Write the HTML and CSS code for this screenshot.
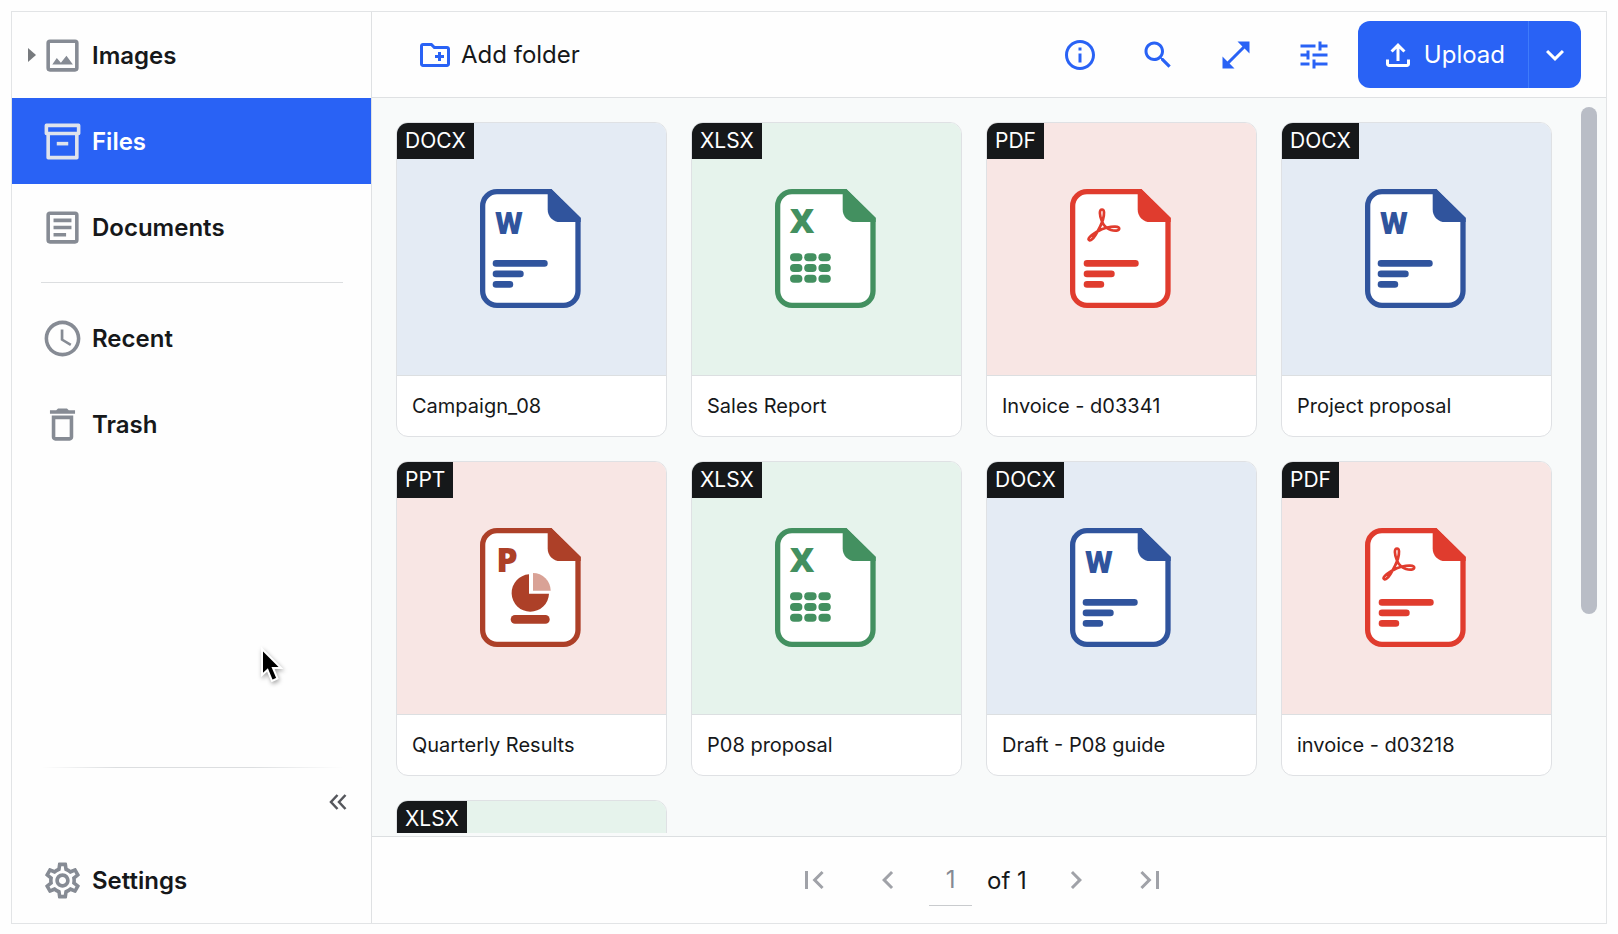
FILE: index.html
```html
<!DOCTYPE html>
<html lang="en">
<head>
    <meta charset="UTF-8">
    <title>File Manager</title>
    <link rel="stylesheet" href="styles.css">
</head>
<body>

<!-- shared file type icons -->
<svg class="sprite" aria-hidden="true">
    <symbol id="page" viewBox="0 0 101 119">
        <path fill="#fff" stroke="currentColor" stroke-width="5.3" d="M17 2.650H70L98 30V102A14.350 14.350 0 0 1 83.700 116.350H17A14.350 14.350 0 0 1 2.650 102V17A14.350 14.350 0 0 1 17 2.650z"/>
        <path fill="currentColor" d="M67.700 0H71.500L100.700 28.700V33H80a12.300 12.300 0 0 1-12.300-12.300z"/>
    </symbol>
    <symbol id="lines" viewBox="0 0 101 119">
        <g fill="currentColor">
            <rect x="12.700" y="71" width="55" height="6.700" rx="3.300"/>
            <rect x="12.700" y="81.500" width="31" height="6.700" rx="3.300"/>
            <rect x="12.700" y="92" width="20.500" height="6.700" rx="3.300"/>
        </g>
    </symbol>
    <symbol id="docx" viewBox="0 0 101 119">
        <use href="#page"/>
        <text class="letter letter-w" x="29" y="45">W</text>
        <use href="#lines"/>
    </symbol>
    <symbol id="xlsx" viewBox="0 0 101 119">
        <use href="#page"/>
        <text class="letter" x="27" y="44">X</text>
        <g fill="currentColor">
            <rect x="15" y="64.300" width="12.400" height="8" rx="4"/>
            <rect x="29.200" y="64.300" width="12.400" height="8" rx="4"/>
            <rect x="43.400" y="64.300" width="12.400" height="8" rx="4"/>
            <rect x="15" y="75" width="12.400" height="8" rx="4"/>
            <rect x="29.200" y="75" width="12.400" height="8" rx="4"/>
            <rect x="43.400" y="75" width="12.400" height="8" rx="4"/>
            <rect x="15" y="85.700" width="12.400" height="8" rx="4"/>
            <rect x="29.200" y="85.700" width="12.400" height="8" rx="4"/>
            <rect x="43.400" y="85.700" width="12.400" height="8" rx="4"/>
        </g>
    </symbol>
    <symbol id="pdf" viewBox="0 0 101 119">
        <use href="#page"/>
        <path fill="none" stroke="currentColor" stroke-width="2.700" stroke-linejoin="round" d="M32 20.500c-2.800 0-2.800 5 0 12 1.500 4 5 7 9 8.500 4 1.200 8.200.8 8.200-1.500 0-2.500-6.700-2.200-12.200-1-4 1-8 3-10.500 4.500-4 2.500-8.500 5.500-8 7.500 1 2 4 .5 7-4.500 3-5 6-10.500 7.500-15.500 1.500-6 1.500-10-1-10z"/>
        <use href="#lines" x="1"/>
    </symbol>
    <symbol id="ppt" viewBox="0 0 101 119">
        <use href="#page"/>
        <text class="letter" x="27" y="44">P</text>
        <path fill="currentColor" d="M49 46.300A18.700 18.700 0 1 0 69 65.700H49z"/>
        <path fill="#d9a296" d="M53 45A17.700 17.700 0 0 1 70.700 62.700H53z"/>
        <rect fill="currentColor" x="30.700" y="87" width="39" height="8.700" rx="4.300"/>
    </symbol>
</svg>

<div class="manager">
    <nav class="sidebar">
        <a class="nav-item" href="#">
            <svg class="caret" viewBox="0 0 8 14"><path d="M0 0l8 7-8 7z"/></svg>
            <svg class="nav-icon" viewBox="0 0 24 24"><path fill-rule="evenodd" d="M5 3h14a2 2 0 0 1 2 2v14a2 2 0 0 1-2 2H5a2 2 0 0 1-2-2V5a2 2 0 0 1 2-2zm0 2v14h14V5z"/><path d="M6.300 17l2.500-3.600 2.300 2.700 3.100-4 3.600 4.900z"/></svg>
            Images
        </a>
        <a class="nav-item active" href="#">
            <span class="caret"></span>
            <svg class="nav-icon" viewBox="0 0 24 24"><path fill="none" stroke="currentColor" stroke-width="2" stroke-linejoin="round" d="M3 3h18v4.500H3zM4 8v13h16V8"/><path d="M8.800 12.200h6.400v2H8.800z"/></svg>
            Files
        </a>
        <a class="nav-item" href="#">
            <span class="caret"></span>
            <svg class="nav-icon" viewBox="0 0 24 24"><path fill-rule="evenodd" d="M5 3h14a2 2 0 0 1 2 2v14a2 2 0 0 1-2 2H5a2 2 0 0 1-2-2V5a2 2 0 0 1 2-2zm0 2v14h14V5z"/><path d="M7 7h10v2H7zM7 11h10v2H7zM7 15h7v2H7z"/></svg>
            Documents
        </a>
        <hr class="divider">
        <a class="nav-item" href="#">
            <span class="caret"></span>
            <svg class="nav-icon" viewBox="0 0 24 24"><path d="M11.990 2C6.470 2 2 6.480 2 12s4.470 10 9.990 10C17.520 22 22 17.520 22 12S17.520 2 11.990 2zM12 20c-4.420 0-8-3.580-8-8s3.580-8 8-8 8 3.580 8 8-3.580 8-8 8zm.5-13H11v6l5.250 3.150.75-1.230-4.500-2.670z"/></svg>
            Recent
        </a>
        <a class="nav-item" href="#">
            <span class="caret"></span>
            <svg class="nav-icon" viewBox="0 0 24 24"><path d="M6 19c0 1.100.9 2 2 2h8c1.100 0 2-.9 2-2V7H6v12zM8 9h8v10H8V9zm7.500-5l-1-1h-5l-1 1H5v2h14V4z"/></svg>
            Trash
        </a>

        <div class="sidebar-bottom">
            <div class="fade-line"></div>
            <button class="collapse" aria-label="Collapse sidebar">
                <svg viewBox="0 0 18 16"><path fill="none" stroke="currentColor" stroke-width="2.500" d="M8.500 1L2 8l6.500 7M16.500 1L10 8l6.500 7"/></svg>
            </button>
            <a class="nav-item" href="#">
                <span class="caret"></span>
                <svg class="nav-icon" viewBox="0 0 24 24"><path d="M19.430 12.980c.04-.32.07-.64.07-.98 0-.34-.03-.66-.07-.98l2.110-1.650c.19-.15.24-.42.12-.64l-2-3.460c-.09-.16-.26-.25-.44-.25-.06 0-.12.01-.17.03l-2.490 1c-.52-.4-1.080-.73-1.690-.98l-.38-2.650C14.460 2.180 14.250 2 14 2h-4c-.25 0-.46.18-.49.42l-.38 2.650c-.61.25-1.170.59-1.690.98l-2.490-1c-.06-.02-.12-.03-.18-.03-.17 0-.34.09-.43.25l-2 3.460c-.13.22-.07.49.12.64l2.110 1.650c-.04.32-.07.65-.07.98 0 .33.03.66.07.98l-2.110 1.650c-.19.15-.24.42-.12.64l2 3.460c.09.16.26.25.44.25.06 0 .12-.01.17-.03l2.490-1c.52.4 1.080.73 1.690.98l.38 2.650c.03.24.24.42.49.42h4c.25 0 .46-.18.49-.42l.38-2.650c.61-.25 1.170-.59 1.690-.98l2.490 1c.06.02.12.03.18.03.17 0 .34-.09.43-.25l2-3.460c.12-.22.07-.49-.12-.64l-2.110-1.650zm-1.980-1.710c.04.31.05.52.05.73 0 .21-.02.43-.05.73l-.14 1.130.89.7 1.080.84-.7 1.210-1.270-.51-1.040-.42-.9.68c-.43.32-.84.56-1.250.73l-1.060.43-.16 1.130-.2 1.350h-1.400l-.19-1.350-.16-1.130-1.060-.43c-.43-.18-.83-.41-1.230-.71l-.91-.7-1.060.43-1.270.51-.7-1.210 1.080-.84.89-.7-.14-1.130c-.03-.31-.05-.54-.05-.74s.02-.43.05-.73l.14-1.130-.89-.7-1.080-.84.7-1.210 1.270.51 1.040.42.9-.68c.43-.32.84-.56 1.250-.73l1.060-.43.16-1.130.2-1.350h1.390l.19 1.350.16 1.130 1.060.43c.43.18.83.41 1.230.71l.91.7 1.060-.43 1.270-.51.7 1.210-1.070.85-.89.7.14 1.130zM12 8c-2.210 0-4 1.790-4 4s1.790 4 4 4 4-1.790 4-4-1.790-4-4-4zm0 6c-1.100 0-2-.9-2-2s.9-2 2-2 2 .9 2 2-.9 2-2 2z"/></svg>
                Settings
            </a>
        </div>
    </nav>

    <main class="main">
        <header class="toolbar">
            <button class="add-folder">
                <svg class="icon blue" viewBox="0 0 24 24"><path d="M20 6h-8l-2-2H4c-1.110 0-1.990.89-1.990 2L2 18c0 1.110.89 2 2 2h16c1.110 0 2-.89 2-2V8c0-1.110-.89-2-2-2zm0 12H4V6h5.170l2 2H20v10zm-8-4h2v2h2v-2h2v-2h-2v-2h-2v2h-2z"/></svg>
                Add folder
            </button>
            <div class="tools">
                <button class="icon-btn blue" aria-label="Info"><svg class="icon" viewBox="0 0 24 24"><path d="M11 7h2v2h-2zm0 4h2v6h-2zm1-9C6.480 2 2 6.480 2 12s4.480 10 10 10 10-4.480 10-10S17.520 2 12 2zm0 18c-4.410 0-8-3.590-8-8s3.590-8 8-8 8 3.590 8 8-3.590 8-8 8z"/></svg></button>
                <button class="icon-btn blue" aria-label="Search"><svg class="icon" viewBox="0 0 24 24"><path d="M15.500 14h-.79l-.28-.27C15.410 12.590 16 11.110 16 9.500 16 5.910 13.090 3 9.500 3S3 5.910 3 9.500 5.910 16 9.500 16c1.610 0 3.090-.59 4.230-1.570l.27.28v.79l5 4.990L20.490 19l-4.990-5zm-6 0C7.010 14 5 11.990 5 9.500S7.010 5 9.500 5 14 7.010 14 9.500 11.990 14 9.500 14z"/></svg></button>
                <button class="icon-btn blue" aria-label="Fullscreen"><svg class="icon" viewBox="0 0 24 24"><path d="M21 11V3h-8l3.290 3.290-10 10L3 13v8h8l-3.290-3.290 10-10z"/></svg></button>
                <button class="icon-btn blue" aria-label="Filters"><svg class="icon" viewBox="0 0 24 24"><path d="M3 17v2h6v-2H3zM3 5v2h10V5H3zm10 16v-2h8v-2h-8v-2h-2v6h2zM7 9v2H3v2h4v2h2V9H7zm14 4v-2H11v2h10zm-6-4h2V7h4V5h-4V3h-2v6z"/></svg></button>
            </div>
            <div class="upload-group">
                <button class="upload">
                    <svg class="icon" viewBox="0 0 24 24"><path d="M18 15v3H6v-3H4v3c0 1.100.9 2 2 2h12c1.100 0 2-.9 2-2v-3h-2zM7 9l1.410 1.410L11 7.830V16h2V7.830l2.590 2.580L17 9l-5-5-5 5z"/></svg>
                    Upload
                </button>
                <button class="upload-more" aria-label="More upload options">
                    <svg class="icon" viewBox="0 0 24 24"><path d="M7.410 8.590L12 13.170l4.590-4.580L18 10l-6 6-6-6z"/></svg>
                </button>
            </div>
        </header>

        <section class="content">
            <div class="files">
                <article class="card"><div class="preview blue-bg"><span class="badge">DOCX</span><svg class="file-icon word"><use href="#docx"/></svg></div><div class="name">Campaign_08</div></article>
                <article class="card"><div class="preview green-bg"><span class="badge">XLSX</span><svg class="file-icon excel"><use href="#xlsx"/></svg></div><div class="name">Sales Report</div></article>
                <article class="card"><div class="preview red-bg"><span class="badge">PDF</span><svg class="file-icon acrobat"><use href="#pdf"/></svg></div><div class="name">Invoice - d03341</div></article>
                <article class="card"><div class="preview blue-bg"><span class="badge">DOCX</span><svg class="file-icon word"><use href="#docx"/></svg></div><div class="name">Project proposal</div></article>
                <article class="card"><div class="preview red-bg"><span class="badge">PPT</span><svg class="file-icon powerpoint"><use href="#ppt"/></svg></div><div class="name">Quarterly Results</div></article>
                <article class="card"><div class="preview green-bg"><span class="badge">XLSX</span><svg class="file-icon excel"><use href="#xlsx"/></svg></div><div class="name">P08 proposal</div></article>
                <article class="card"><div class="preview blue-bg"><span class="badge">DOCX</span><svg class="file-icon word"><use href="#docx"/></svg></div><div class="name">Draft - P08 guide</div></article>
                <article class="card"><div class="preview red-bg"><span class="badge">PDF</span><svg class="file-icon acrobat"><use href="#pdf"/></svg></div><div class="name">invoice - d03218</div></article>
                <article class="card"><div class="preview green-bg"><span class="badge">XLSX</span></div></article>
            </div>
            <div class="scrollbar"></div>
        </section>

        <footer class="pager">
            <div class="pager-group">
                <button class="icon-btn" aria-label="First page"><svg class="icon" viewBox="0 0 24 24"><path d="M18.410 16.590L13.820 12l4.590-4.590L17 6l-6 6 6 6zM6 6h2v12H6z"/></svg></button>
                <button class="icon-btn" aria-label="Previous page"><svg class="icon" viewBox="0 0 24 24"><path d="M15.410 7.410L14 6l-6 6 6 6 1.410-1.410L10.830 12z"/></svg></button>
            </div>
            <label class="page-label"><input class="page-input" type="text" value="1" aria-label="Page"> of 1</label>
            <div class="pager-group">
                <button class="icon-btn" aria-label="Next page"><svg class="icon" viewBox="0 0 24 24"><path d="M10 6L8.590 7.410 13.170 12l-4.580 4.590L10 18l6-6z"/></svg></button>
                <button class="icon-btn" aria-label="Last page"><svg class="icon" viewBox="0 0 24 24"><path d="M5.590 7.410L10.180 12l-4.590 4.590L7 18l6-6-6-6zM16 6h2v12h-2z"/></svg></button>
            </div>
        </footer>
    </main>
</div>

<svg class="cursor" viewBox="0 0 24 36"><path d="M2 2v26l5.500-5 4.500 11 5.500-2.500-4.500-10.500h8z" fill="#000" stroke="#fff" stroke-width="2"/></svg>

</body>
</html>
```
FILE: styles.css
```css
* {
    box-sizing: border-box;
}
body {
    margin: 0;
    padding: 11px 11px 10px;
    height: 100vh;
    font-family: Inter, "Liberation Sans", sans-serif;
    font-size: 24px;
    color: #16181a;
    background-color: #fefefe;
}
button, input {
    font: inherit;
    color: inherit;
    background: none;
    border: none;
    padding: 0;
}
button {
    cursor: pointer;
}
svg {
    display: block;
    fill: currentColor;
}
.sprite {
    display: none;
}
.manager {
    display: flex;
    height: 100%;
    border: 1px solid #e2e4e6;
}

/* Sidebar */
.sidebar {
    display: flex;
    flex-direction: column;
    flex: 0 0 360px;
    border-right: 1px solid #dfe1e3;
}
.nav-item {
    display: flex;
    align-items: center;
    height: 86px;
    padding-left: 16px;
    font-weight: 600;
    color: #16181a;
    text-decoration: none;
}
.nav-item.active {
    background-color: #2962f5;
    color: #ffffff;
}
.caret {
    width: 8px;
    height: 14px;
    margin-right: 5px;
    color: #777a7e;
}
.nav-icon {
    width: 43px;
    height: 43px;
    margin-right: 8px;
    color: #868b94;
}
.active .nav-icon {
    color: #dfe3ec;
}
.divider {
    height: 1px;
    margin: 12px 28px 12px 29px;
    border: none;
    background-color: #dcdee0;
}
.sidebar-bottom {
    display: flex;
    flex-direction: column;
    margin-top: auto;
}
.fade-line {
    height: 1px;
    margin: 0 28px 0 29px;
    background: linear-gradient(to right, transparent, #dcdee0 25%, #dcdee0 70%, transparent);
}
.collapse {
    align-self: flex-end;
    margin: 26px 24px 27px 0;
    color: #55575c;
}
.collapse svg {
    width: 18px;
    height: 16px;
}

/* Toolbar */
.main {
    display: flex;
    flex-direction: column;
    flex: 1;
    min-width: 0;
}
.toolbar {
    display: flex;
    align-items: center;
    height: 86px;
    padding: 0 25px 0 45px;
    border-bottom: 1px solid #dfe1e3;
}
.icon {
    width: 36px;
    height: 36px;
}
.blue {
    color: #2962f5;
}
.add-folder {
    display: flex;
    align-items: center;
    gap: 8px;
}
.tools {
    display: flex;
    gap: 42px;
    margin: 0 26px 0 auto;
}
.upload-group {
    display: flex;
    height: 67px;
    border-radius: 12px;
    background-color: #2962f5;
    color: #ffffff;
}
.upload {
    display: flex;
    align-items: center;
    gap: 8px;
    padding: 0 23px 0 22px;
}
.upload-more {
    padding: 0 8px;
    border-left: 1px solid #3f7bfa;
}

/* Files */
.content {
    display: flex;
    flex: 1;
    gap: 29px;
    min-height: 0;
    padding: 0 9px 3px 24px;
    background-color: #f8fafa;
}
.files {
    display: grid;
    grid-template-columns: repeat(4, 1fr);
    grid-auto-rows: 315px;
    gap: 24px;
    flex: 1;
    padding-top: 24px;
    overflow: hidden;
}
.card {
    border: 1px solid #dfe1e4;
    border-radius: 12px;
    background-color: #ffffff;
    overflow: hidden;
}
.preview {
    position: relative;
    display: flex;
    align-items: center;
    justify-content: center;
    height: 253px;
    padding: 0 2px 1px 0;
    border-bottom: 1px solid #dcdfe1;
}
.blue-bg {
    background-color: #e4ebf4;
}
.green-bg {
    background-color: #e6f3ec;
}
.red-bg {
    background-color: #f8e6e4;
}
.badge {
    position: absolute;
    top: 0;
    left: 0;
    padding: 0 8px;
    font-size: 21px;
    line-height: 36px;
    color: #ffffff;
    background-color: #16181a;
}
.file-icon {
    width: 101px;
    height: 119px;
}
.word {
    color: #30549d;
}
.excel {
    color: #439060;
}
.acrobat {
    color: #e03c2e;
}
.powerpoint {
    color: #ad4028;
}
.letter {
    font-family: "Open Sans", sans-serif;
    font-size: 34px;
    font-weight: 800;
    text-anchor: middle;
}
.letter-w {
    font-family: Roboto, sans-serif;
    font-size: 32px;
    font-weight: 900;
}
.name {
    padding: 0 15px;
    font-size: 20px;
    line-height: 60px;
    white-space: nowrap;
}
.scrollbar {
    width: 16px;
    height: 69%;
    margin-top: 9px;
    border-radius: 8px;
    background-color: #b9bdc6;
}

/* Pager */
.pager {
    display: flex;
    align-items: center;
    justify-content: center;
    height: 87px;
    padding-right: 14px;
    border-top: 1px solid #dcdfe1;
}
.pager-group {
    display: flex;
    gap: 38px;
    color: #a0a2a8;
}
.page-label {
    display: flex;
    align-items: center;
    gap: 15px;
    margin: 0 31px 0 23px;
}
.page-input {
    width: 43px;
    height: 51px;
    border-bottom: 1px solid #c9cbce;
    text-align: center;
    color: #858993;
}

.cursor {
    position: absolute;
    top: 647px;
    left: 260px;
    width: 24px;
    height: 36px;
    filter: drop-shadow(1px 2px 2px rgba(0,0,0,0.35));
}
```
